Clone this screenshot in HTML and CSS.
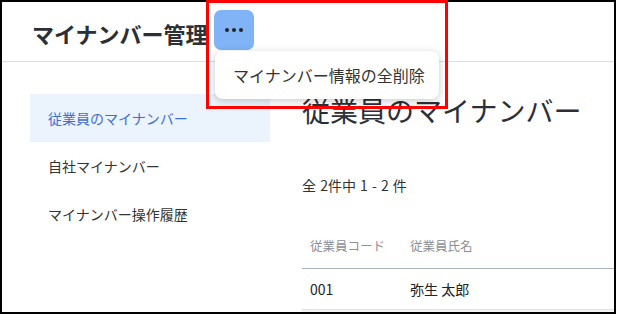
FILE: index.html
```html
<!DOCTYPE html>
<html lang="ja">
<head>
<meta charset="utf-8">
<title>マイナンバー管理</title>
<link rel="stylesheet" href="styles.css">
</head>
<body>
<div class="frame">
  <header class="header">
    <h1 class="app-title">マイナンバー管理</h1>
    <button class="more-btn" aria-label="その他">
      <span class="dot"></span><span class="dot"></span><span class="dot"></span>
    </button>
  </header>
  <div class="content">
    <nav class="sidebar">
      <a class="nav-item active">従業員のマイナンバー</a>
      <a class="nav-item">自社マイナンバー</a>
      <a class="nav-item">マイナンバー操作履歴</a>
    </nav>
    <main class="main">
      <h2 class="page-title">従業員のマイナンバー</h2>
      <p class="count">全 2件中 1 - 2 件</p>
      <table class="table">
        <thead>
          <tr><th class="col-code">従業員コード</th><th>従業員氏名</th></tr>
        </thead>
        <tbody>
          <tr><td class="col-code">001</td><td>弥生 太郎</td></tr>
          <tr class="next"><td class="col-code"></td><td></td></tr>
        </tbody>
      </table>
    </main>
  </div>
  <div class="menu">
    <div class="menu-item">マイナンバー情報の全削除</div>
  </div>
</div>
<div class="highlight"></div>
</body>
</html>
```
FILE: styles.css
```css
* { box-sizing: border-box; }
html, body { margin: 0; padding: 0; background: #fff; }
body {
  position: relative;
  width: 617px;
  height: 314px;
  font-family: "Noto Sans CJK JP", "Noto Sans", sans-serif;
  color: #333;
  overflow: hidden;
}
.frame {
  position: relative;
  width: 616px;
  height: 314px;
  border: 2px solid #000;
  overflow: hidden;
}
.header {
  height: 60px;
  border-bottom: 1px solid #dddddd;
  display: flex;
  align-items: flex-start;
  padding-left: 30px;
}
.app-title {
  margin: 0;
  margin-top: 15px;
  font-size: 22px;
  line-height: 32px;
  font-weight: 700;
  color: #2c3036;
}
.more-btn {
  margin: 8px 0 0 6px;
  width: 40px;
  height: 40px;
  border: none;
  border-radius: 7px;
  background: #80b4f6;
  display: flex;
  align-items: center;
  justify-content: center;
  gap: 3px;
  padding: 0;
}
.dot {
  width: 4px;
  height: 4px;
  border-radius: 50%;
  background: #1f2328;
}
.content { display: flex; }
.sidebar {
  width: 240px;
  margin-left: 28px;
  padding-top: 32px;
  display: flex;
  flex-direction: column;
}
.nav-item {
  height: 48px;
  display: flex;
  align-items: center;
  padding-left: 18px;
  font-size: 14px;
  color: #333;
}
.nav-item.active {
  background: #ebf3fd;
  color: #3f6fd3;
}
.main {
  flex: 1;
  margin-left: 32px;
  padding-top: 28px;
}
.page-title {
  margin: 0;
  font-size: 28px;
  line-height: 40px;
  font-weight: 400;
  color: #2c3036;
}
.count {
  margin: 45px 0 0;
  font-size: 14px;
  line-height: 20px;
  word-spacing: 1px;
}
.table {
  margin-top: 29px;
  width: 100%;
  border-collapse: collapse;
}
.table th, .table td {
  text-align: left;
  padding: 0 0 0 8px;
}
.table th {
  height: 44px;
  font-size: 12.5px;
  font-weight: 400;
  color: #8a8f98;
  border-bottom: 1px solid #aab3bf;
}
.table td {
  height: 41px;
  font-size: 14px;
  color: #222;
  border-bottom: 1px solid #e2e2e2;
}
.col-code { width: 100px; }
.table tr.next td { background: #f3f3f3; }
.menu {
  position: absolute;
  left: 213px;
  top: 49px;
  width: 224px;
  height: 48px;
  background: #fff;
  border-radius: 8px;
  box-shadow: 0 2px 8px rgba(0,0,0,0.22);
  display: flex;
  align-items: center;
  padding-left: 18px;
}
.menu-item {
  font-size: 16px;
  color: #333;
}
.highlight {
  position: absolute;
  left: 206px;
  top: 0;
  width: 242px;
  height: 109px;
  border: 3px solid #ff0000;
}
```
